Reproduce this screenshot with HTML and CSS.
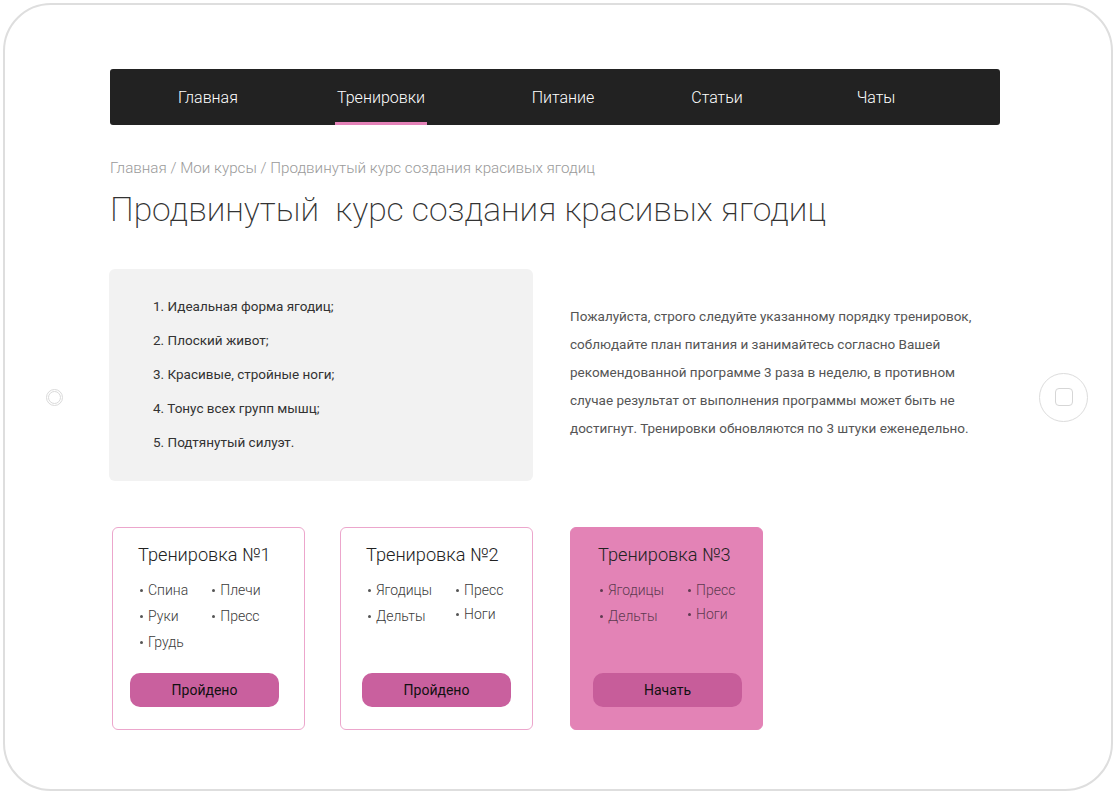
FILE: index.html
```html
<!DOCTYPE html>
<html lang="ru">
<head>
<meta charset="utf-8">
<title>Продвинутый курс создания красивых ягодиц</title>
<link rel="stylesheet" href="styles.css">
</head>
<body>
<div class="device">
  <div class="bezel bezel-left">
    <span class="camera"></span>
  </div>
  <main class="screen">
    <nav class="nav">
      <a class="nav-item" href="#">Главная</a>
      <a class="nav-item active" href="#">Тренировки</a>
      <a class="nav-item" href="#">Питание</a>
      <a class="nav-item" href="#">Статьи</a>
      <a class="nav-item" href="#">Чаты</a>
    </nav>
    <div class="breadcrumb">Главная / Мои курсы / Продвинутый курс создания красивых ягодиц</div>
    <h1 class="title">Продвинутый&nbsp; курс создания красивых ягодиц</h1>
    <section class="intro">
      <ol class="goals">
        <li>1. Идеальная форма ягодиц;</li>
        <li>2. Плоский живот;</li>
        <li>3. Красивые, стройные ноги;</li>
        <li>4. Тонус всех групп мышц;</li>
        <li>5. Подтянутый силуэт.</li>
      </ol>
      <p class="note">Пожалуйста, строго следуйте указанному порядку тренировок, соблюдайте план питания и занимайтесь согласно Вашей рекомендованной программе 3 раза в неделю, в противном случае результат от выполнения программы может быть не достигнут. Тренировки обновляются по 3 штуки еженедельно.</p>
    </section>
    <section class="cards">
      <div class="card card-first">
        <h2 class="card-title">Тренировка №1</h2>
        <div class="muscles">
          <ul><li>Спина</li><li>Руки</li><li>Грудь</li></ul>
          <ul><li>Плечи</li><li>Пресс</li></ul>
        </div>
        <button class="btn">Пройдено</button>
      </div>
      <div class="card card-second">
        <h2 class="card-title">Тренировка №2</h2>
        <div class="muscles">
          <ul><li>Ягодицы</li><li>Дельты</li></ul>
          <ul class="tight"><li>Пресс</li><li>Ноги</li></ul>
        </div>
        <button class="btn">Пройдено</button>
      </div>
      <div class="card card-current">
        <h2 class="card-title">Тренировка №3</h2>
        <div class="muscles">
          <ul><li>Ягодицы</li><li>Дельты</li></ul>
          <ul class="tight"><li>Пресс</li><li>Ноги</li></ul>
        </div>
        <button class="btn">Начать</button>
      </div>
    </section>
  </main>
  <div class="bezel bezel-right">
    <span class="home"><span class="home-square"></span></span>
  </div>
</div>
</body>
</html>
```
FILE: styles.css
```css
* { box-sizing: border-box; }
html, body { margin: 0; padding: 0; background: #fff; }
body {
  font-family: Roboto, "Noto Sans", sans-serif;
  color: #333;
}
.device {
  margin: 3px;
  width: 1110px;
  height: 788px;
  border: 2px solid #dedede;
  border-radius: 48px;
  display: flex;
}
.bezel {
  display: flex;
  align-items: center;
}
.bezel-left {
  width: 105px;
  justify-content: center;
  padding-right: 7px;
}
.camera {
  width: 17px;
  height: 17px;
  border: 1px solid #dadada;
  border-radius: 50%;
  display: flex;
  align-items: center;
  justify-content: center;
}
.camera::after {
  content: "";
  width: 11px;
  height: 11px;
  border: 1px solid #dadada;
  border-radius: 50%;
}
.bezel-right {
  flex: 1;
  padding-left: 39px;
}
.home {
  width: 49px;
  height: 49px;
  border: 1px solid #dcdcdc;
  border-radius: 50%;
  display: flex;
  align-items: center;
  justify-content: center;
}
.home-square {
  width: 18px;
  height: 18px;
  border: 1px solid #d6d6d6;
  border-radius: 4px;
}
.screen {
  width: 890px;
  padding-top: 64px;
}
.nav {
  height: 56px;
  background: #222;
  border-radius: 3px;
  display: grid;
  grid-template-columns: 196px 150px 214px 94px 224px;
  justify-items: center;
}
.nav-item {
  color: #fff;
  text-decoration: none;
  font-size: 16px;
  font-weight: 300;
  height: 56px;
  padding: 0 2px;
  border-bottom: 3px solid transparent;
  line-height: 57px;
}
.nav-item.active {
  border-bottom-color: #e482b8;
}
.breadcrumb {
  margin-top: 33px;
  font-size: 15.2px;
  line-height: 20px;
  font-weight: 300;
  color: #9a9a9a;
}
.title {
  margin: 10px 0 0;
  font-size: 33.6px;
  line-height: 44px;
  font-weight: 200;
  color: #333;
  white-space: pre;
}
.intro {
  margin-top: 37px;
  display: flex;
}
.goals {
  list-style: none;
  margin: 0 0 0 -1px;
  width: 424px;
  height: 212px;
  background: #f2f2f2;
  border-radius: 6px;
  padding: 20px 0 0 44px;
}
.goals li {
  font-size: 13.5px;
  line-height: 34px;
  color: #333;
}
.note {
  margin: 33px 0 0 37px;
  width: 420px;
  font-size: 13.5px;
  line-height: 28px;
  color: #555;
}
.cards {
  margin-top: 46px;
  display: flex;
  gap: 35px;
  padding-left: 2px;
}
.card {
  width: 193px;
  height: 203px;
  border: 1px solid #eca6cc;
  border-radius: 6px;
  padding: 15px 0 0 25px;
  display: flex;
  flex-direction: column;
  align-items: flex-start;
}
.card-current {
  margin-left: 2px;
  background: #e383b6;
  border-color: #e383b6;
  padding-left: 27px;
}
.card-title {
  margin: 0;
  font-size: 18.2px;
  line-height: 24px;
  font-weight: 300;
  color: #222;
}
.muscles {
  margin-top: 10px;
  display: flex;
  gap: 24px;
  padding-left: 2px;
  height: 86px;
}
.muscles ul {
  list-style: none;
  margin: 0;
  padding: 0;
}
.muscles li {
  font-size: 14px;
  font-weight: 300;
  line-height: 26px;
  color: #3a3a3a;
  padding-left: 8px;
  position: relative;
}
.muscles ul.tight li + li { margin-top: -2px; }
.muscles li::before {
  content: "";
  position: absolute;
  left: 0;
  top: 12px;
  width: 3px;
  height: 3px;
  border-radius: 50%;
  background: #555;
}
.card-current .muscles li { color: #5e3a50; }
.card-current .muscles li::before { background: #5e3a50; }
.btn {
  margin: 10px 0 0 -8px;
  width: 149px;
  height: 34px;
  border: 0;
  border-radius: 10px;
  background: #c9609e;
  font-family: inherit;
  font-size: 14px;
  color: #111;
}
.card-second .btn { margin-left: -4px; }
.card-current .btn {
  margin-left: -5px;
  background: #c75d9a;
}
```
